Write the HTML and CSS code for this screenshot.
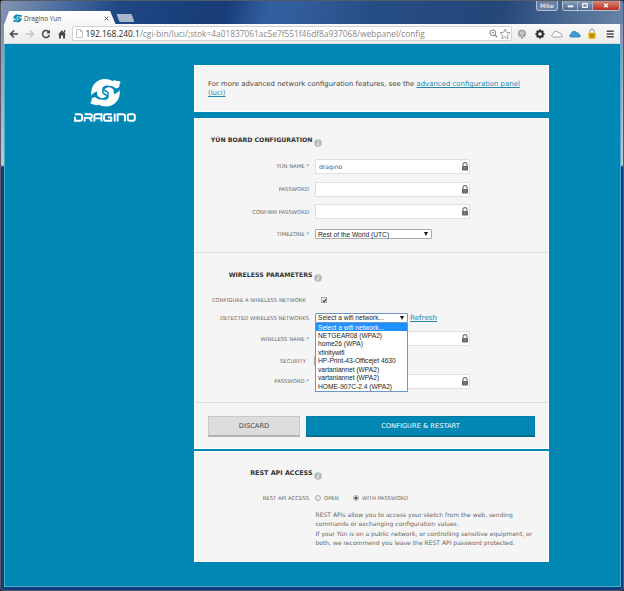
FILE: index.html
```html
<!DOCTYPE html>
<html lang="en"><head><meta charset="utf-8"><title>Dragino Yun</title><link rel="stylesheet" href="styles.css"></head>
<body>
<svg class="defs" width="0" height="0"><defs>
<path id="half" d="M1.400 16.500C0 7 6.500 0 15 0c4 0 5.500 1.200 7.500 2 1.500-1.300 3-1 4 0 2-.3 4 .2 4 1.300 0 1.500-1.500 1.500-1 2.700.3 2-1.500 3.500-3 3.200-2 .2-2.500-1.800-5-2.200-3-.5-4.500 0-5 2 .5 2-1.500 4-4 3.500-1 1-2 .3-2.300-.8C6 12.500 3 13.500 1.400 16.500z"/>
<path id="cut" d="M24 9.800C20 6 13.500 6.500 13 9.800c-.2 2.200 3.800 1.500 5 3.700 1 2.300-.5 4.800-4.500 6.200" fill="none" stroke="currentColor" stroke-width="1.500"/>
<symbol id="dragon" viewBox="0 0 31 28"><circle cx="15.500" cy="13.700" r="8.500"/><use href="#half"/><use href="#half" transform="rotate(180 15.500 13.700)"/><use href="#cut"/><use href="#cut" transform="rotate(180 15.500 13.700)"/></symbol>
<symbol id="lock" viewBox="0 0 8 9"><path d="M2 4V2.600a2 2 0 0 1 4 0V4" fill="none" stroke="#707070" stroke-width="1.1"/><rect x="1" y="4" width="6" height="4.500" rx=".7" fill="#626262"/><path d="M2.500 5.500h3M2.500 7h3" stroke="#aaa" stroke-width=".5"/></symbol>
<symbol id="info" viewBox="0 0 8 8"><circle cx="4" cy="4" r="3.800" fill="#b9b9b9"/><path d="M4.600 1.500v.8M4.400 3.300 3.700 6.400" stroke="#fff" stroke-width="1"/></symbol>
<symbol id="cloud" viewBox="0 0 12 8"><path d="M2.500 7C0 7 .2 4.500 2.200 4.200 2.200 1.400 6 .1 7.500 2.800c2-.4 2.800.9 2.600 1.900C12 5.200 11.700 7 10 7z"/></symbol>
</defs></svg>
<div class="window">
<header class="titlebar">
 <div class="tab"><svg class="favicon"><use href="#dragon"/></svg><span class="t-tab">Dragino Yun</span><svg class="tabx" viewBox="0 0 5 5"><path d="M.7.7l3.600 3.600M4.300.7.7 4.300" stroke="#555"/></svg></div>
 <div class="newtab"></div>
 <div class="user">Mike</div>
 <div class="winbtns"><i><svg viewBox="0 0 15 10"><path d="M5 6h6" stroke="#fff" stroke-width="2"/></svg></i><i><svg viewBox="0 0 15 10"><rect x="5" y="3" width="5" height="4" fill="none" stroke="#fff" stroke-width="1.3"/></svg></i><i class="close"><svg viewBox="0 0 26 10"><path d="M11 3l4 4M15 3l-4 4" stroke="#fff" stroke-width="1.5"/></svg></i></div>
</header>
<nav class="toolbar">
 <svg class="ic" viewBox="0 0 10 10"><path d="M9 5H2M5 1.500 1.500 5 5 8.500" fill="none" stroke="#484848" stroke-width="1.6"/></svg>
 <svg class="ic" viewBox="0 0 10 10"><path d="M1 5h7M5 1.500 8.500 5 5 8.500" fill="none" stroke="#c4c4c4" stroke-width="1.4"/></svg>
 <svg class="ic" viewBox="0 0 10 10"><path d="M8 3.200A3.500 3.500 0 1 0 8.400 6" fill="none" stroke="#484848" stroke-width="1.5"/><path d="M9 .8v3.700H5.300z" fill="#484848"/></svg>
 <svg class="ic" viewBox="0 0 10 10"><path d="M1 5.500 5 1.200l4 4.300H8V9.500H6V6.500H4v3H2v-4zM7 1h1.200v2.500H7z" fill="#484848"/></svg>
 <div class="url"><svg class="page" viewBox="0 0 7 9"><path d="M.5.5h4l2 2v6h-6zM4.500.5v2h2" fill="#fff" stroke="#aaa" stroke-width=".7"/></svg><span class="t-url"><b>192.168.240.1</b>/cgi-bin/luci/;stok=4a01837061ac5e7f551f46df8a937068/webpanel/config</span>
 <svg class="mag" viewBox="0 0 10 10"><circle cx="4.200" cy="4.200" r="3.200" fill="none" stroke="#777"/><path d="M6.500 6.500 9 9" stroke="#777" stroke-width="1.4"/><path d="M2.800 4.200h2.800" stroke="#777"/></svg>
 <svg class="star" viewBox="0 0 12 12"><path d="m6 1 1.400 3.300 3.600.4-2.700 2.400.8 3.600L6 8.800l-3.100 1.900.8-3.600L1 4.700l3.600-.4z" fill="#fff" stroke="#888" stroke-width=".8"/></svg></div>
 <div class="ext">
 <svg class="e" viewBox="0 0 12 12"><circle cx="6" cy="5.400" r="4" fill="#a5a5a5"/><path d="M6 3v7.500M4.500 4v2M7.500 4v2" stroke="#eee" stroke-width=".7"/><path d="M5 9h2v2H5z" fill="#aaa"/></svg>
 <svg class="e" viewBox="0 0 12 12"><circle cx="6" cy="6" r="2.800" fill="none" stroke="#2c2c2c" stroke-width="2"/><path d="M6 1.300v2M6 8.700v2M1.300 6h2M8.700 6h2M2.700 2.700l1.200 1.200M8.100 8.100l1.200 1.200M9.300 2.700 8.100 3.900M3.900 8.100 2.700 9.300" stroke="#2c2c2c" stroke-width="1.6"/></svg>
 <svg class="e cloud"><use href="#cloud"/></svg>
 <svg class="e cloud blue"><use href="#cloud"/></svg>
 <svg class="e" viewBox="0 0 12 12"><path d="M4 6V3a2 2 0 0 1 4 0v3" fill="none" stroke="#999"/><rect x="2.300" y="4.800" width="7.400" height="6" rx=".6" fill="#eab500"/><circle cx="6" cy="7.800" r="1.500" fill="none" stroke="#6b560d" stroke-width=".8"/></svg>
 <svg class="e" viewBox="0 0 12 12"><path d="M2.700 3.200h7M2.700 6h7M2.700 8.800h7" stroke="#4b4b4b" stroke-width="1.6"/></svg>
 </div>
</nav>
<main>
 <aside><svg class="logo"><use href="#dragon"/></svg><svg class="brand" viewBox="0 0 64 10" preserveAspectRatio="none"><g fill="none" stroke="#fff" stroke-width="2"><path d="M1 4.200V8.600H6q2.300 0 2.300-2V3.400q0-2-2.300-2H1M11 9.500V5.500h6q1.500 0 1.500-2T17 1.400h-6M16 5.500l2.500 4M21 9.500V3.400q0-2 2-2h5.400v8.100M21 5.900h7.400M39 1.400h-6q-2 0-2 2v3.200q0 2 2 2h5.500V4.800H35M42 .5v9M45 9.500V1.400h5.600q2 0 2 2v6.100"/><rect x="55.500" y="1.400" width="7.300" height="7.200" rx="1.800"/></g></svg></aside>
 <div class="content">
 <section class="card notice"><p>For more advanced network configuration features, see the <a>advanced configuration panel</a><br><a>(luci)</a></p></section>
 <section class="card config">
  <div class="group board">
   <h2><span>YÚN BOARD CONFIGURATION</span><svg class="info"><use href="#info"/></svg></h2>
   <div class="row"><label><span>YÚN NAME <em>*</em></span></label><div class="input"><span class="t-in">dragino</span><svg class="lock"><use href="#lock"/></svg></div></div>
   <div class="row"><label><span>PASSWORD</span></label><div class="input"><svg class="lock"><use href="#lock"/></svg></div></div>
   <div class="row"><label><span>CONFIRM PASSWORD</span></label><div class="input"><svg class="lock"><use href="#lock"/></svg></div></div>
   <div class="row"><label><span>TIMEZONE <em>*</em></span></label><div class="select tz"><span>Rest of the World (UTC)</span><i class="arrow"></i></div></div>
  </div>
  <div class="group wireless">
   <h2><span>WIRELESS PARAMETERS</span><svg class="info"><use href="#info"/></svg></h2>
   <div class="row r-check"><label class="inset"><span>CONFIGURE A WIRELESS NETWORK</span></label><div class="check"><svg viewBox="0 0 6 6"><path d="m1 3 1.500 1.700L5 1.200" fill="none" stroke="#333" stroke-width="1.3"/></svg></div></div>
   <div class="row r-detect"><label><span>DETECTED WIRELESS NETWORKS</span></label><div class="select wifi"><span>Select a wifi network...</span><i class="arrow"></i>
    <div class="menu"><div class="on">Select a wifi network...</div><div>NETGEAR08 (WPA2)</div><div>home26 (WPA)</div><div>xfinitywifi</div><div>HP-Print-43-Officejet 4630</div><div>vartaniannet (WPA2)</div><div>vartaniannet (WPA2)</div><div>HOME-907C-2.4 (WPA2)</div></div></div><a class="refresh">Refresh</a></div>
   <div class="row r-name"><label><span>WIRELESS NAME <em>*</em></span></label><div class="input"><svg class="lock"><use href="#lock"/></svg></div></div>
   <div class="row r-sec"><label class="inset"><span>SECURITY</span></label><div class="select sec"></div></div>
   <div class="row r-pass"><label><span>PASSWORD <em>*</em></span></label><div class="input"><svg class="lock"><use href="#lock"/></svg></div></div>
  </div>
  <div class="actions"><div class="btn discard">DISCARD</div><div class="btn save">CONFIGURE &amp; RESTART</div></div>
 </section>
 <section class="card rest">
  <h2><span>REST API ACCESS</span><svg class="info"><use href="#info"/></svg></h2>
  <div class="row r-api"><label><span>REST API ACCESS</span></label><i class="radio"></i><span class="opt open">OPEN</span><i class="radio sel"></i><span class="opt">WITH PASSWORD</span></div>
  <p class="help">REST APIs allow you to access your sketch from the web, sending<br>commands or exchanging configuration values.<br>If your Yún is on a public network, or controlling sensitive equipment, or<br>both, we recommend you leave the REST API password protected.</p>
 </section>
 </div>
</main>
</div>
</body></html>
```
FILE: styles.css
```css
* { box-sizing: border-box; }
body { margin: 0; background: #26272b; font: 6.7px "DejaVu Sans", sans-serif; color: #444; }
.defs { position: absolute; }
svg { display: block; flex: none; }
span, p, .menu { white-space: nowrap; }
.window { width: 624px; height: 591px; border: 1px solid #555b66; border-radius: 4px; background: linear-gradient(#7e87a8 0, #c4c5d5 164px, #0e3c80 166px, #0e3c80 100%); padding: 0 3px 3px; }
.titlebar { height: 23px; margin: 0 -3px; padding: 0 3px; display: flex; background: linear-gradient(105deg, #8593b1 0, #496d9f 10%, #1f4783 19%, #173c78 36%, #335f9f 43%, #315c99 49%, #254d84 60%, #254779 80%, #6985a7 100%); }
.tab { margin: 10px 0 0; width: 112px; height: 14px; padding: 0 6px 0 9px; display: flex; align-items: center; background: linear-gradient(#fff, #f5f5f5); clip-path: polygon(5px 0, 106px 0, 112px 100%, 0 100%); }
.favicon { width: 9px; height: 9px; fill: #0689b5; color: #fff; margin-right: 2px; }
.tabx { width: 5px; height: 5px; margin-left: auto; margin-right: 1px; }
.newtab { width: 15px; height: 8px; margin: 13px 0 0 2px; background: #a8b7cf; transform: skewX(20deg); border-radius: 1px; }
.user { margin-left: auto; width: 22px; height: 10px; border: 1px solid #b7c1d2; border-top: 0; border-radius: 0 0 3px 3px; background: #6880a3; color: #fff; font-size: 6px; line-height: 9px; text-align: center; }
.winbtns { display: flex; height: 10px; margin: 0 0 0 4px; border: 1px solid #bcc5d4; border-top: 0; border-radius: 0 0 3px 3px; overflow: hidden; }
.winbtns i { width: 15px; background: linear-gradient(#8ca0bb, #4e6a92); border-right: 1px solid #a4b3c7; }
.winbtns .close { width: 26px; background: linear-gradient(#d88778, #bb2e20); border: 0; }
.winbtns svg { width: 100%; height: 9px; }
.toolbar { height: 20px; background: linear-gradient(#f8f8f8, #ededed); border-bottom: 1px solid #dcdcdc; display: flex; align-items: center; padding-left: 5px; }
.ic { width: 10px; height: 10px; margin-right: 6px; }
.url { width: 440px; height: 15px; display: flex; align-items: center; border: 1px solid #d2d2d2; border-radius: 2px; background: #fff; padding-left: 3px; margin-left: -1px; }
.page { width: 7px; height: 9px; margin-right: 2.5px; }
.mag { width: 9px; height: 9px; margin-left: auto; }
.star { width: 12px; height: 12px; margin: 0 0 0 1px; }
.ext { display: flex; margin-left: 4px; gap: 5.5px; align-items: center; }
.e { width: 12px; height: 12px; }
.cloud { height: 8px; fill: #fff; stroke: #777; stroke-width: .7; }
.blue { fill: #3b9ed6; stroke: #2b6e9d; }
main { height: 543px; background: #0087b4; border: solid #4caecb; border-width: 0 1px 1px; display: flex; margin-right: -.5px; }
aside { width: 189px; padding: 35px 0 0 69px; }
.logo { width: 31px; height: 28px; margin: 0 0 6px 16px; fill: #fff; color: #0087b4; }
.brand { width: 62px; height: 9px; }
.content { width: 355px; padding-top: 21px; }
.card { background: #f5f5f5; border: 1px solid #fff; }
.notice { height: 47px; padding: 14px 0 0 13px; margin-bottom: 6px; font-size: 6.93px; }
p { margin: 0; line-height: 9.3px; }
a { color: #2487ad; text-decoration: underline; }
.config { height: 331px; margin-bottom: 2px; }
.group { border-bottom: 1px solid #dedede; }
.board { height: 134px; padding-top: 14px; }
.wireless { height: 150px; padding-top: 15px; }
h2 { margin: 0; height: 13px; display: flex; justify-content: flex-end; width: 127px; line-height: 13px; color: #333; font-size: 6.22px; }
.info { width: 8px; height: 8px; margin: 6px 0 0 1.5px; }
.rest .info { margin-top: 5px; }
.board h2 { margin-bottom: 9px; }
.row { display: flex; align-items: center; height: 22.7px; }
label { width: 114px; text-align: right; color: #686868; margin-right: 6px; }
label.inset { padding-right: 3px; }
label em { color: #3b7aa5; font-style: normal; }
label span, .opt { font-size: 5.3px; }
.input { width: 155px; height: 15px; border: 1px solid #e0e0e0; background: #fff; display: flex; align-items: center; padding: 0 0 0 3px; color: #555; }
.t-in { font-size: 6.1px; }
.lock { width: 8px; height: 9px; margin-left: auto; }
.select { height: 10px; border: 1px solid #aaa; background: #fff; border-radius: 1px; padding: 0 3px 0 2px; display: flex; align-items: center; color: #222; font-family: "Liberation Sans", sans-serif; font-size: 6.65px; }
.tz { width: 117px; }
.wifi { width: 93px; position: relative; border-color: #6f96c9; }
.arrow { margin-left: auto; border: 2px solid transparent; border-top: 4px solid #111; border-bottom: 0; }
.menu { position: absolute; left: -1px; top: 9px; width: 93px; height: 69px; background: #fff; border: 1px solid #6f96c9; border-top: 0; z-index: 2; }
.menu div { height: 8.45px; line-height: 9px; padding-left: 2px; }
.menu .on { background: #1e90ff; color: #fff; }
.r-check { height: 17px; margin-top: 10.5px; }
.check { width: 6px; height: 6px; margin-left: 6px; border: 1px solid #aaa; background: #eee; }
.check svg { width: 5px; height: 5px; margin-top: -.5px; }
.r-detect { height: 18px; }
.refresh { margin: -1px 0 0 2px; font-size: 7.2px; }
.r-name { height: 22px; margin-top: 1px; }
.r-sec { height: 22px; }
.sec { width: 60px; margin-left: -1px; }
.r-pass { height: 19px; }
.actions { display: flex; padding: 13px; gap: 6px; }
.btn { height: 21px; display: flex; align-items: center; justify-content: center; padding-bottom: 1px; font-size: 6.7px; }
.discard { width: 92px; background: #ddd; border: 1px solid #c8c8c8; border-bottom: 2px solid #b1b1b1; }
.save { width: 229px; background: #0087b4; border: 1px solid #047da5; border-bottom: 2px solid #056a8b; color: #fff; }
.rest { height: 111px; padding-top: 15px; }
.rest h2 { font-size: 6.4px; }
.r-api { height: 14px; margin-top: 11px; }
.radio { width: 6px; height: 6px; border: 1px solid #aaa; border-radius: 50%; background: #eee; margin: -1px 3px 0 0; }
.sel { background: radial-gradient(#444 0 1px, #eee 1.8px); }
.opt { color: #666; }
.open { width: 29px; }
.help { margin: 5px 0 0 120.5px; color: #666; font-size: 6.02px; line-height: 9.4px; }
.t-tab { font: 6.5px "Open Sans", sans-serif; }
.t-url { font: 8.35px "Open Sans", sans-serif; color: #888; }
.t-url b { font-weight: 400; color: #222; }
```
